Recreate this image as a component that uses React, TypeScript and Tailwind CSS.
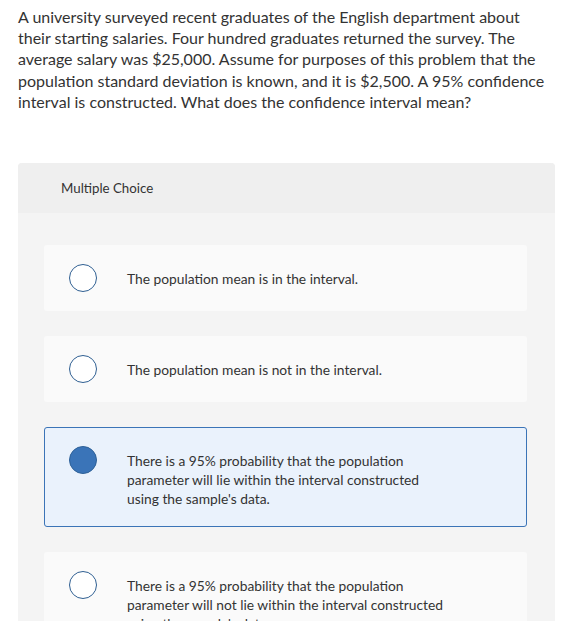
import React from 'react';

type Choice = {
  id: string;
  text: string;
};

const choices: Choice[] = [
  { id: 'a', text: 'The population mean is in the interval.' },
  { id: 'b', text: 'The population mean is not in the interval.' },
  {
    id: 'c',
    text: "There is a 95% probability that the population parameter will lie within the interval constructed using the sample's data.",
  },
  {
    id: 'd',
    text: "There is a 95% probability that the population parameter will not lie within the interval constructed using the sample's data.",
  },
];

function Radio({ checked }: { checked: boolean }) {
  if (checked) {
    return <div className="h-[28px] w-[28px] shrink-0 rounded-full border border-[#2e6198] bg-[#3a74b8]" />;
  }
  return <div className="h-[28px] w-[28px] shrink-0 rounded-full border-[1.5px] border-[#2f5f92] bg-white" />;
}

function ChoiceCard({ choice, selected }: { choice: Choice; selected: boolean }) {
  return (
    <div
      className={
        selected
          ? 'flex items-start rounded-[3px] border border-[#3b74b7] bg-[#eaf2fc] py-[18px] pl-[24px] pr-[40px]'
          : 'flex items-start rounded-[3px] border border-transparent bg-[#fafafa] py-[18px] pl-[24px] pr-[40px]'
      }
    >
      <Radio checked={selected} />
      <div className="ml-[30px] max-w-[324px] pt-[5px] text-[13.8px] leading-[19px] text-[#333333]">{choice.text}</div>
    </div>
  );
}

export default function App() {
  const selected = 'c';

  return (
    <div className="min-h-screen bg-white font-['Lato',sans-serif]">
      <p className="w-[556px] pl-[18px] pt-[6px] text-[16px] leading-[21.2px] text-[#333333]">
        A university surveyed recent graduates of the English department about their starting salaries. Four hundred
        graduates returned the survey. The average salary was $25,000. Assume for purposes of this problem that the
        population standard deviation is known, and it is $2,500. A 95% confidence interval is constructed. What does
        the confidence interval mean?
      </p>

      <div className="ml-[18px] mt-[51px] w-[537px] overflow-hidden rounded-t-[4px] bg-[#f4f4f4]">
        <div className="flex h-[50px] items-center bg-[#efefef] pl-[43px] pt-[2px] text-[13.3px] text-[#333333]">
          Multiple Choice
        </div>
        <div className="flex flex-col gap-[25px] pb-[24px] pl-[26px] pr-[28px] pt-[32px]">
          {choices.map((c) => (
            <ChoiceCard key={c.id} choice={c} selected={c.id === selected} />
          ))}
        </div>
      </div>
    </div>
  );
}
